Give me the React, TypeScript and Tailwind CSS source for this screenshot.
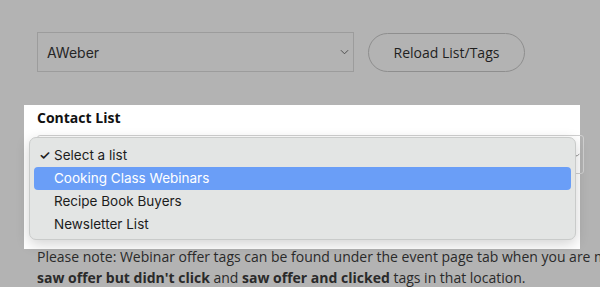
import React from "react";

const lists = ["Select a list", "Cooking Class Webinars", "Recipe Book Buyers", "Newsletter List"];

function Chevron({ className }: { className?: string }) {
  return (
    <svg viewBox="0 0 10 6" className={className} fill="none" stroke="currentColor" strokeWidth="1">
      <path d="M1 1l4 4 4-4" />
    </svg>
  );
}

export default function App() {
  return (
    <div className="w-[600px] h-[287px] overflow-hidden bg-[#b3b3b3] font-['Open_Sans',sans-serif] text-[#242424]">
      <div className="flex gap-[14px] pt-[32px] pl-[37px]">
        <div className="w-[317px] h-[40px] border border-[#9c9c9c] flex items-center justify-between pl-[9px] pr-[4px]">
          <span className="text-[14px] font-['Inter',sans-serif] text-[#262626]">AWeber</span>
          <Chevron className="w-[9px] h-[6px] text-[#444]" />
        </div>
        <button className="w-[157px] h-[39px] mt-[1px] rounded-full border border-[#8e8e8e] text-[14px] text-[#1f1f1f]">
          Reload List/Tags
        </button>
      </div>

      <div className="relative mt-[33px] ml-[24px] w-[556px] h-[144px] bg-white pt-[3px] pl-[13px]">
        <div className="text-[14px] font-bold leading-[20px] text-[#111]">Contact List</div>
        <div className="mt-[7px] w-[547px] h-[39px] border border-[#d0d0d0] rounded-[3px] flex items-center justify-end pr-[3px]">
          <Chevron className="w-[6px] h-[4px] text-[#555]" />
        </div>

        <div className="absolute left-[5px] top-[32px] w-[547px] h-[103px] rounded-[7px] bg-[#e3e5e4] border border-[#c9cbca] shadow-[0_4px_14px_rgba(0,0,0,0.18)] pt-[6px] px-[4px] font-['Inter',sans-serif] text-[13.5px]">
          {lists.map((name, i) => (
            <div
              key={name}
              className={`h-[23px] flex items-center rounded-[4px] ${
                i === 1 ? "bg-[#6a9ef7] text-white" : "text-[#1c1c1c]"
              }`}
            >
              <span className="w-[20px] pl-[5px] text-[13px] font-semibold">{i === 0 ? "✓" : ""}</span>
              <span>{name}</span>
            </div>
          ))}
        </div>
      </div>

      <p className="-mt-[3px] pl-[37px] text-[14px] leading-[21px] whitespace-nowrap text-[#2a2a2a]">
        Please note: Webinar offer tags can be found under the event page tab when you are managing the
        <br />
        <b>saw offer but didn't click</b> and <b>saw offer and clicked</b> tags in that location.
      </p>
    </div>
  );
}
